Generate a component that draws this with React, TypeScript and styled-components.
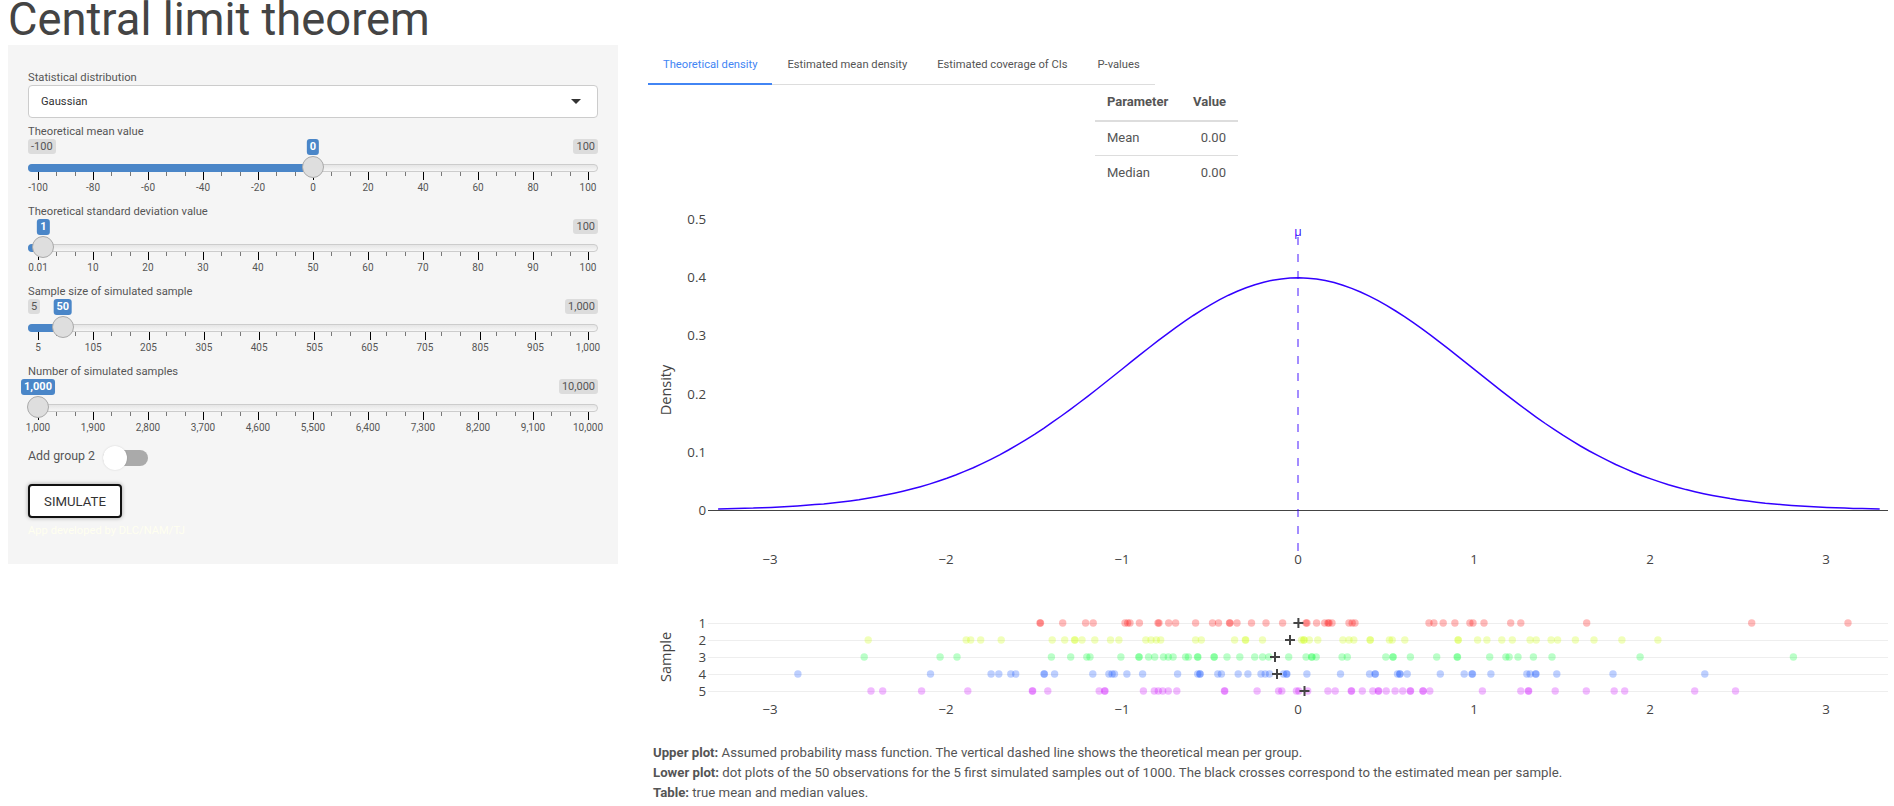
import React from 'react';
import styled, { createGlobalStyle } from 'styled-components';

const GlobalStyle = createGlobalStyle`
  html, body {
    margin: 0;
    padding: 0;
    background: #fff;
    font-family: Roboto, "Liberation Sans", sans-serif;
    color: #555;
  }
`;

type SliderProps = {
  label: string;
  min: number;
  max: number;
  value: number;
  ticks: number[];
  hideMin?: boolean;
  format?: (n: number) => string;
};

const TRACK_INSET = 10;
const GRID_WIDTH = 550;

const withComma = (n: number) => n.toLocaleString('en-US');

const range = (from: number, step: number, count: number) =>
  Array.from({ length: count }, (_, i) => from + step * i);

const sliders: SliderProps[] = [
  { label: 'Theoretical mean value', min: -100, max: 100, value: 0, ticks: range(-100, 20, 11) },
  {
    label: 'Theoretical standard deviation value',
    min: 0.01,
    max: 100,
    value: 1,
    hideMin: true,
    ticks: [0.01, ...range(10, 10, 10)],
  },
  {
    label: 'Sample size of simulated sample',
    min: 5,
    max: 1000,
    value: 50,
    ticks: [...range(5, 100, 10), 1000],
    format: withComma,
  },
  {
    label: 'Number of simulated samples',
    min: 1000,
    max: 10000,
    value: 1000,
    hideMin: true,
    ticks: range(1000, 900, 11),
    format: withComma,
  },
];

const Slider: React.FC<SliderProps> = ({ label, min, max, value, ticks, hideMin, format }) => {
  const show = format || ((n: number) => String(n));
  const place = (v: number) => TRACK_INSET + ((v - min) / (max - min)) * GRID_WIDTH;
  const thumb = place(value);
  const minors = range(0, 1, 31).filter((i) => i % 3 !== 0);

  return (
    <SliderBlock>
      <FieldLabel>{label}</FieldLabel>
      <SliderBody>
        {!hideMin && <MinPill>{show(min)}</MinPill>}
        <MaxPill>{show(max)}</MaxPill>
        <ValuePill style={{ left: thumb }}>{show(value)}</ValuePill>
        <Track />
        <TrackFill style={{ width: thumb }} />
        {minors.map((i) => (
          <MinorTick key={i} style={{ left: TRACK_INSET + (i / 30) * GRID_WIDTH }} />
        ))}
        {ticks.map((t) => (
          <React.Fragment key={t}>
            <MajorTick style={{ left: place(t) }} />
            <TickLabel style={{ left: place(t) }}>{show(t)}</TickLabel>
          </React.Fragment>
        ))}
        <Thumb style={{ left: thumb }} />
      </SliderBody>
    </SliderBlock>
  );
};

// pixel positions read off the picture, repeated values are the darker overlapping dots
const dotRows: { y: number; color: string; mean: number; xs: number[] }[] = [
  {
    y: 623,
    color: '#ff0000',
    mean: 1298.4,
    xs: [
      1040, 1040.5, 1062.7, 1085.6, 1093.2, 1125, 1127.7, 1130, 1139.4, 1158, 1159, 1168.7, 1175.6,
      1195.6, 1212.5, 1218.5, 1229.5, 1230, 1237, 1251.5, 1266, 1282.6, 1306, 1307, 1316.6, 1324.7,
      1328, 1329, 1332, 1349, 1352.2, 1355, 1429, 1433.9, 1443.2, 1454.9, 1469.9, 1473, 1484,
      1510.7, 1520.8, 1586.7, 1751.7, 1848,
    ],
  },
  {
    y: 640,
    color: '#ccff00',
    mean: 1290,
    xs: [
      868.2, 966.2, 970.7, 980.7, 1001.2, 1052.2, 1064.7, 1074.5, 1075, 1082, 1094.8, 1110.5, 1118.9,
      1145.8, 1151, 1156.3, 1160.7, 1195.6, 1201.3, 1234.6, 1245.3, 1245.7, 1262.5, 1301.6, 1303.7,
      1304.2, 1309.3, 1317.8, 1342.9, 1349, 1353.8, 1370, 1370.4, 1389.4, 1392.2, 1404.8, 1458, 1458.3,
      1477.6, 1486.9, 1501.8, 1512.3, 1530.1, 1536.2, 1551.1, 1557.6, 1575.4, 1594, 1621.9, 1657.9,
    ],
  },
  {
    y: 657,
    color: '#00ff33',
    mean: 1275,
    xs: [
      864.2, 940.1, 957, 1051.4, 1070.7, 1086.8, 1090, 1120.9, 1138.8, 1139.2, 1148.6, 1154.7, 1163.5,
      1168.3, 1173.1, 1185.6, 1188.4, 1197.5, 1197.9, 1214, 1214.3, 1227, 1239.8, 1254.7, 1262.6,
      1268.8, 1288.7, 1306.1, 1311.6, 1312, 1316.2, 1342.1, 1347.3, 1385.8, 1392.8, 1393.2, 1410.4,
      1436.7, 1457.1, 1457.5, 1489.7, 1505.9, 1509.1, 1518, 1533.4, 1552, 1640.1, 1793.4,
    ],
  },
  {
    y: 674,
    color: '#0a4dff',
    mean: 1277,
    xs: [
      797.9, 930.5, 991.1, 998.8, 1010.8, 1015.7, 1044, 1044.4, 1054.6, 1092.8, 1108.9, 1112.1, 1114.5,
      1126.9, 1142.6, 1177.6, 1197.7, 1199.8, 1200.2, 1217.8, 1221.4, 1238.2, 1247.9, 1261, 1265.2,
      1269.5, 1283.5, 1286.5, 1286.9, 1306.9, 1340.5, 1369.6, 1375, 1375.4, 1397.5, 1399.7, 1400.1,
      1407.2, 1440.3, 1464.2, 1472, 1472.5, 1490.9, 1526.9, 1530.1, 1535.6, 1536, 1556.8, 1613, 1704.8,
    ],
  },
  {
    y: 691,
    color: '#cc00ff',
    mean: 1304.5,
    xs: [
      871, 882.7, 921.6, 967.8, 1032.3, 1032.7, 1047.8, 1099.2, 1104.6, 1105, 1143.4, 1154.3, 1158.3,
      1162.7, 1168.3, 1176.8, 1224.4, 1224.8, 1257.1, 1278.6, 1281.8, 1296.4, 1298.8, 1307.7, 1327.9,
      1335.2, 1351.2, 1351.6, 1362.3, 1372.8, 1378.3, 1378.7, 1386.2, 1395.1, 1402.7, 1410.2, 1410.6,
      1422.8, 1423.2, 1429.8, 1482.4, 1520.8, 1528.3, 1528.7, 1555.2, 1586.3, 1614.2, 1624.7, 1694.7,
      1735.5,
    ],
  },
];

const xTicks = [-3, -2, -1, 0, 1, 2, 3];
const xPos = (v: number) => 1298 + v * 176;
const yPos = (d: number) => 510 - d * 582;
const xLabel = (v: number) => (v < 0 ? `\u2212${-v}` : String(v));

const densityPath = range(-3.295, 0.05, 133)
  .map((v, i) => {
    const d = Math.exp((-v * v) / 2) / Math.sqrt(2 * Math.PI);
    return `${i === 0 ? 'M' : 'L'}${xPos(v).toFixed(1)} ${yPos(d).toFixed(1)}`;
  })
  .join(' ');

const DensityPlot: React.FC = () => (
  <PlotSvg width={1246} height={400} viewBox="648 190 1246 400">
    {[0.5, 0.4, 0.3, 0.2, 0.1, 0].map((d) => (
      <AxisText key={d} x={706} y={yPos(d) + 5} textAnchor="end">
        {d}
      </AxisText>
    ))}
    {xTicks.map((v) => (
      <AxisText key={v} x={xPos(v)} y={564} textAnchor="middle">
        {xLabel(v)}
      </AxisText>
    ))}
    <AxisTitle transform="translate(670.5 390) rotate(-90)" textAnchor="middle">
      Density
    </AxisTitle>
    <line x1={708} x2={1888} y1={510.5} y2={510.5} stroke="#444" strokeWidth={1} />
    <line
      x1={1298}
      x2={1298}
      y1={237}
      y2={551}
      stroke="#3300ff"
      strokeOpacity={0.45}
      strokeWidth={2}
      strokeDasharray="8 9"
    />
    <path d={densityPath} fill="none" stroke="#3300ff" strokeWidth={1.5} />
    <MeanMark x={1298} y={236} textAnchor="middle">
      μ
    </MeanMark>
  </PlotSvg>
);

const DotPlot: React.FC = () => (
  <PlotSvg width={1246} height={140} viewBox="648 590 1246 140">
    {dotRows.map((row, i) => (
      <g key={row.y}>
        <line x1={708} x2={1888} y1={row.y + 0.5} y2={row.y + 0.5} stroke="#eee" strokeWidth={1} />
        <AxisText x={706} y={row.y + 5} textAnchor="end">
          {i + 1}
        </AxisText>
        {row.xs.map((x, k) => (
          <circle key={k} cx={x} cy={row.y} r={3.7} fill={row.color} fillOpacity={0.27} />
        ))}
        <path
          d={`M${row.mean - 5} ${row.y}H${row.mean + 5}M${row.mean} ${row.y - 5}V${row.y + 5}`}
          stroke="#444"
          strokeWidth={2}
        />
      </g>
    ))}
    {xTicks.map((v) => (
      <AxisText key={v} x={xPos(v)} y={714} textAnchor="middle">
        {xLabel(v)}
      </AxisText>
    ))}
    <AxisTitle transform="translate(670.5 657) rotate(-90)" textAnchor="middle">
      Sample
    </AxisTitle>
  </PlotSvg>
);

const tabs = ['Theoretical density', 'Estimated mean density', 'Estimated coverage of CIs', 'P-values'];

const App: React.FC = () => (
  <Page>
    <GlobalStyle />
    <Title>Central limit theorem</Title>
    <Columns>
      <Sidebar>
        <Field>
          <FieldLabel>Statistical distribution</FieldLabel>
          <SelectBox>
            Gaussian
            <Caret />
          </SelectBox>
        </Field>
        {sliders.map((s) => (
          <Slider key={s.label} {...s} />
        ))}
        <ToggleRow>
          <ToggleLabel>Add group 2</ToggleLabel>
          <Toggle>
            <ToggleKnob />
          </Toggle>
        </ToggleRow>
        <SimulateButton type="button">SIMULATE</SimulateButton>
        <Credit>App developed by DLC/NAM/TJ</Credit>
      </Sidebar>
      <Main>
        <TabBar>
          {tabs.map((t, i) => (
            <Tab key={t} $active={i === 0}>
              {t}
            </Tab>
          ))}
        </TabBar>
        <ParamTable>
          <thead>
            <tr>
              <HeadCell>Parameter</HeadCell>
              <HeadCell $right>Value</HeadCell>
            </tr>
          </thead>
          <tbody>
            <tr>
              <BodyCell>Mean</BodyCell>
              <BodyCell $right>0.00</BodyCell>
            </tr>
            <tr>
              <BodyCell>Median</BodyCell>
              <BodyCell $right>0.00</BodyCell>
            </tr>
          </tbody>
        </ParamTable>
        <DensityPlot />
        <DotPlot />
        <Notes>
          <div>
            <strong>Upper plot:</strong> Assumed probability mass function. The vertical dashed line shows the
            theoretical mean per group.
          </div>
          <div>
            <strong>Lower plot:</strong> dot plots of the 50 observations for the 5 first simulated samples out of
            1000. The black crosses correspond to the estimated mean per sample.
          </div>
          <div>
            <strong>Table:</strong> true mean and median values.
          </div>
        </Notes>
      </Main>
    </Columns>
  </Page>
);

const Page = styled.div`
  width: 1894px;
  height: 806px;
  padding-left: 8px;
  box-sizing: border-box;
  overflow: hidden;
`;

const Title = styled.h1`
  margin: 0;
  height: 45px;
  font-size: 45.3px;
  line-height: 40px;
  font-weight: 400;
  color: #444;
`;

const Columns = styled.div`
  display: flex;
  align-items: flex-start;
  gap: 30px;
`;

const Sidebar = styled.div`
  width: 610px;
  box-sizing: border-box;
  padding: 24px 20px 25px 20px;
  background: #f5f5f5;
  display: flex;
  flex-direction: column;
  align-items: flex-start;
`;

const Field = styled.div`
  width: 100%;
  margin-bottom: 5px;
`;

const FieldLabel = styled.div`
  height: 16px;
  font-size: 11.2px;
  line-height: 17px;
  color: #555;
  white-space: nowrap;
`;

const SelectBox = styled.div`
  position: relative;
  height: 33px;
  box-sizing: border-box;
  padding-left: 12px;
  background: #fff;
  border: 1px solid #ccc;
  border-radius: 4px;
  font-size: 11.2px;
  line-height: 31px;
  color: #333;
`;

const Caret = styled.span`
  position: absolute;
  right: 16px;
  top: 13px;
  border-left: 5px solid transparent;
  border-right: 5px solid transparent;
  border-top: 5px solid #333;
`;

const SliderBlock = styled.div`
  width: 100%;
  height: 80px;
`;

const SliderBody = styled.div`
  position: relative;
  height: 64px;
`;

const Pill = styled.span`
  position: absolute;
  top: 0;
  height: 15px;
  padding: 0 3px;
  font-size: 11px;
  line-height: 15px;
  color: #555;
  background: rgba(0, 0, 0, 0.1);
  border-radius: 3px;
`;

const MinPill = styled(Pill)`
  left: 0;
`;

const MaxPill = styled(Pill)`
  right: 0;
`;

const ValuePill = styled.span`
  position: absolute;
  top: 0;
  height: 16px;
  padding: 0 3px;
  transform: translateX(-50%);
  font-size: 11px;
  font-weight: 700;
  line-height: 16px;
  color: #fff;
  background: #4a86c8;
  border-radius: 3px;
`;

const Track = styled.div`
  position: absolute;
  top: 25px;
  left: 0;
  right: 0;
  height: 8px;
  box-sizing: border-box;
  background: linear-gradient(to bottom, #ddd -50%, #fff 150%);
  border: 1px solid #ccc;
  border-radius: 8px;
`;

const TrackFill = styled.div`
  position: absolute;
  top: 25px;
  left: 0;
  height: 8px;
  background: #4a86c8;
  border-radius: 8px 0 0 8px;
`;

const Thumb = styled.div`
  position: absolute;
  top: 17px;
  width: 22px;
  height: 22px;
  box-sizing: border-box;
  margin-left: -11px;
  background: #dedede;
  border: 1px solid #aaa;
  border-radius: 50%;
`;

const MajorTick = styled.span`
  position: absolute;
  top: 33px;
  width: 1px;
  height: 8px;
  background: #000;
`;

const MinorTick = styled.span`
  position: absolute;
  top: 33px;
  width: 1px;
  height: 4px;
  background: #777;
`;

const TickLabel = styled.span`
  position: absolute;
  top: 42px;
  font-size: 10px;
  line-height: 14px;
  color: #555;
  transform: translateX(-50%);
  white-space: nowrap;
`;

const ToggleRow = styled.div`
  display: flex;
  align-items: center;
  height: 24px;
  margin-top: 3px;
`;

const ToggleLabel = styled.span`
  width: 75px;
  font-size: 12.4px;
  line-height: 20px;
  margin-top: -4px;
  color: #555;
`;

const Toggle = styled.div`
  position: relative;
  width: 45px;
  height: 16px;
  background: #aaa;
  border-radius: 8px;
`;

const ToggleKnob = styled.div`
  position: absolute;
  left: 0;
  top: -4px;
  width: 24px;
  height: 24px;
  background: #fff;
  border-radius: 50%;
  box-shadow: 0 0 2px rgba(0, 0, 0, 0.15);
`;

const SimulateButton = styled.button`
  width: 94px;
  height: 34px;
  margin-top: 14px;
  padding: 0;
  font-family: inherit;
  font-size: 13.2px;
  color: #333;
  background: #fff;
  border: 2px solid #111;
  border-radius: 4px;
  box-shadow: 0 0 4px rgba(0, 0, 0, 0.35);
`;

const Credit = styled.div`
  margin-top: 5px;
  font-size: 11.2px;
  line-height: 16px;
  color: #fffff0;
`;

const Main = styled.div`
  width: 1246px;
`;

const TabBar = styled.div`
  display: flex;
  width: 507px;
  height: 40px;
  box-sizing: border-box;
  border-bottom: 1px solid #ddd;
`;

const Tab = styled.div<{ $active: boolean }>`
  height: 40px;
  box-sizing: border-box;
  padding: 13px 15px 0;
  font-size: 11.2px;
  line-height: 14px;
  white-space: nowrap;
  color: ${(props) => (props.$active ? '#4285f4' : '#555')};
  border-bottom: 2px solid ${(props) => (props.$active ? '#4285f4' : 'transparent')};
`;

const ParamTable = styled.table`
  margin-left: 447px;
  width: 143px;
  height: 105px;
  border-collapse: collapse;
  font-size: 13px;
  color: #555;
`;

const HeadCell = styled.th<{ $right?: boolean }>`
  box-sizing: border-box;
  height: 36px;
  padding: 0 12px 2px;
  font-weight: 700;
  text-align: ${(props) => (props.$right ? 'right' : 'left')};
  border-bottom: 2px solid #ddd;
`;

const BodyCell = styled.td<{ $right?: boolean }>`
  box-sizing: border-box;
  height: 34px;
  padding: 0 12px 2px;
  text-align: ${(props) => (props.$right ? 'right' : 'left')};
  tr + tr & {
    border-top: 1px solid #ddd;
  }
`;

const PlotSvg = styled.svg`
  display: block;
`;

const AxisText = styled.text`
  font-family: "Open Sans", verdana, sans-serif;
  font-size: 13.3px;
  fill: #444;
`;

const AxisTitle = styled.text`
  font-family: "Open Sans", verdana, sans-serif;
  font-size: 14.5px;
  fill: #444;
`;

const MeanMark = styled.text`
  font-family: "Open Sans", verdana, sans-serif;
  font-size: 12px;
  fill: #3300ff;
`;

const Notes = styled.div`
  margin: 13px 0 0 5px;
  font-size: 13.2px;
  line-height: 20px;
  color: #555;
`;

export default App;
